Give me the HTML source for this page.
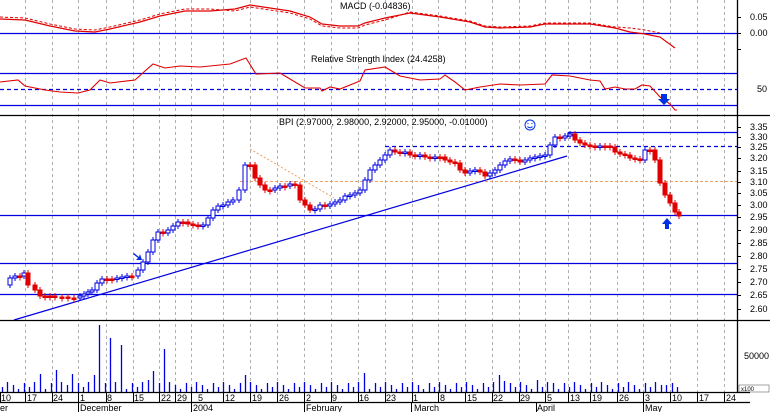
<!DOCTYPE html>
<html><head><meta charset="utf-8"><style>
html,body{margin:0;padding:0;background:#fff;width:770px;height:412px;overflow:hidden}
svg{display:block}
text{font-family:"Liberation Sans",sans-serif;font-size:9px;fill:#000}
</style></head><body>
<svg id="s" width="770" height="412" viewBox="0 0 770 412" xmlns="http://www.w3.org/2000/svg">
<g id="grid" stroke="#b0b0b0" stroke-dasharray="3,3" stroke-width="1"></g>
<line x1="0" y1="33.5" x2="737" y2="33.5" stroke="#0000e0" stroke-width="1.3"/>
<polyline id="macd" fill="none" stroke="#e00000" stroke-width="1.2"/>
<polyline id="macd2" fill="none" stroke="#e00000" stroke-width="1" stroke-dasharray="3,2"/>
<text x="340" y="9">MACD (-0.04836)</text>
<line x1="0" y1="73.5" x2="737" y2="73.5" stroke="#0000e0" stroke-width="1.3"/>
<line x1="0" y1="89.5" x2="737" y2="89.5" stroke="#0000e0" stroke-width="1.3" stroke-dasharray="4,3"/>
<line x1="0" y1="105.5" x2="737" y2="105.5" stroke="#0000e0" stroke-width="1.3"/>
<polyline id="rsi" fill="none" stroke="#e00000" stroke-width="1.1"/>
<text x="311" y="62">Relative Strength Index (24.4258)</text>
<path d="M661 94h6v5h3l-6 6-6-6h3z" fill="#0030e0"/>
<line x1="0" y1="115.5" x2="770" y2="115.5" stroke="#000" stroke-width="1.3"/>
<text x="279" y="125">BPI (2.97000, 2.98000, 2.92000, 2.95000, -0.01000)</text>
<circle cx="530" cy="125" r="5" fill="none" stroke="#0030e0"/>
<path d="M527.5 126.5q2.5 2.5 5 0" fill="none" stroke="#0030e0"/>
<circle cx="528" cy="123.5" r=".6" fill="#0030e0"/><circle cx="532" cy="123.5" r=".6" fill="#0030e0"/>
<line x1="568" y1="132.5" x2="737" y2="132.5" stroke="#0000e0" stroke-width="1.3"/>
<line x1="568" y1="132.5" x2="568" y2="137" stroke="#0000e0" stroke-width="1.3"/>
<line x1="385" y1="146.5" x2="737" y2="146.5" stroke="#0000e0" stroke-width="1.3" stroke-dasharray="4,3"/>
<line x1="240" y1="181.5" x2="737" y2="181.5" stroke="#f0a060" stroke-width="1" stroke-dasharray="3,2"/>
<line x1="250" y1="149" x2="334" y2="198" stroke="#f0a060" stroke-width="1" stroke-dasharray="2,2"/>
<line x1="0" y1="215.5" x2="737" y2="215.5" stroke="#0000e0" stroke-width="1.3"/>
<line x1="0" y1="263.5" x2="737" y2="263.5" stroke="#0000e0" stroke-width="1.3"/>
<line x1="0" y1="294.5" x2="737" y2="294.5" stroke="#0000e0" stroke-width="1.3"/>
<line x1="14" y1="320" x2="567" y2="156" stroke="#0000e0" stroke-width="1.2"/>
<g id="candles"></g>
<path d="M134 253l5 4 1-3 2 6-6 0 2-2-5-4z" fill="#0030e0"/>
<path d="M667 218l5 6h-3v5h-4v-5h-3z" fill="#0030e0"/>
<line x1="0" y1="320.5" x2="770" y2="320.5" stroke="#000" stroke-width="1.3"/>
<g id="vol" stroke="#0000e0" stroke-width="1.3"></g>
<text x="744" y="359">50000</text>
<rect x="739" y="385" width="30" height="7" fill="#fff" stroke="#666" stroke-width=".6"/>
<text x="741" y="391" style="font-size:6px">x100</text>
<line x1="737.5" y1="0" x2="737.5" y2="392" stroke="#000" stroke-width="1.3"/>
<g id="ticks" stroke="#000"></g>
<g id="axis"></g>
<line x1="0" y1="392.5" x2="750" y2="392.5" stroke="#000" stroke-width="1.3"/>
<line x1="0" y1="402.5" x2="750" y2="402.5" stroke="#000" stroke-width="1.3"/>
<g id="dates" style="font-size:8.5px"></g>
</svg>
<script>
(function(){
var NS="http://www.w3.org/2000/svg";
function el(p,t,a,txt){var e=document.createElementNS(NS,t);for(var k in a)e.setAttribute(k,a[k]);if(txt)e.textContent=txt;document.getElementById(p).appendChild(e);return e;}
var gx=[25,52,78,106,133,159,175,191,223,250,277,304,331,358,385,412,438,465,492,519,545,568,590,617,643,670,697,724];
gx.forEach(function(x){el('grid','line',{x1:x+.5,y1:0,x2:x+.5,y2:392});});
function pl(id,pts){document.getElementById(id).setAttribute('points',pts.map(function(p){return p.join(',')}).join(' '));}
var m=[[0,19],[25,20],[50,26],[75,31],[95,32],[110,29],[140,22],[160,16],[185,11],[210,11],[235,9],[250,5],[270,8],[290,11],[310,17],[322,24],[340,26],[358,26],[365,23],[385,18],[410,13],[440,17],[470,22],[485,27],[500,28],[530,27],[545,24],[560,24],[590,24],[615,28],[630,32],[645,34],[660,37],[675,48]];
pl('macd',m);
pl('macd2',m.map(function(p,i){return [p[0],p[1]+(i<10?-2:(i<20?2:(i<30?-1:-4)))]}).slice(0,33));
pl('rsi',[[0,82],[18,80],[25,86],[45,90],[60,92],[78,93],[90,90],[100,80],[110,83],[135,80],[145,71],[153,64],[165,68],[180,66],[200,67],[230,64],[246,58],[256,74],[280,73],[290,79],[305,88],[320,88],[322,91],[330,87],[340,89],[360,81],[365,70],[385,67],[400,76],[420,80],[440,79],[445,75],[455,82],[465,90],[480,87],[500,84],[520,85],[545,84],[552,75],[570,76],[590,80],[600,81],[605,89],[615,87],[625,89],[635,89],[642,85],[650,86],[660,97],[670,104],[675,110],[677,110]]);
var c=[[5,285],[10,278],[15,276],[20,276],[24,273],[28,285],[35,290],[40,296],[45,296],[50,296],[55,297],[62,297],[68,298],[74,298],[80,296],[84,294],[88,292],[92,290],[97,283],[102,279],[107,279],[112,279],[117,278],[122,277],[127,276],[132,276],[138,270],[143,262],[148,252],[153,240],[158,232],[163,233],[168,230],[173,226],[178,222],[183,222],[188,224],[193,225],[198,226],[203,225],[208,218],[213,210],[218,206],[223,205],[228,202],[233,200],[239,190],[245,165],[250,165],[255,178],[260,185],[265,190],[270,190],[275,188],[280,186],[285,186],[290,184],[295,185],[300,200],[305,205],[310,210],[315,209],[320,205],[325,206],[330,204],[335,202],[340,200],[345,196],[350,195],[355,193],[360,190],[365,180],[370,170],[375,165],[380,160],[385,155],[390,150],[395,152],[400,153],[405,152],[410,155],[415,156],[420,155],[425,157],[430,158],[435,157],[440,157],[445,160],[450,162],[455,163],[460,170],[465,173],[470,171],[475,170],[480,172],[485,176],[490,173],[495,170],[500,165],[505,161],[510,159],[515,160],[520,162],[525,160],[530,158],[535,157],[540,156],[545,155],[550,145],[555,137],[560,138],[565,136],[570,134],[575,140],[580,143],[585,145],[590,146],[595,147],[600,146],[605,146],[610,147],[615,152],[620,154],[625,155],[630,158],[635,159],[640,160],[645,150],[650,150],[655,160],[660,183],[665,195],[670,203],[675,212],[679,216]];
for(var i=1;i<c.length;i++){var x=c[i][0],o=c[i-1][1],cl=c[i][1];var up=cl<o;var ty=Math.min(o,cl),h=Math.max(Math.abs(o-cl),1.5);
var col=up?'#0000e0':'#e00000';
el('candles','line',{x1:x,y1:ty-3,x2:x,y2:ty+h+3,stroke:col,'stroke-width':1});
el('candles','rect',{x:x-2,y:ty,width:4,height:h,fill:up?'#fff':col,stroke:col,'stroke-width':1});}
var tall={99:325,110:338,121:345,164:349,56:370,40:374,153:371,74:374,146:380,93:375,245:375,363:373,498:375,506:381,539:380,555:383,665:385,550:379};
for(var x=2;x<680;x+=5.4){var xr=Math.round(x);var y=392-(3+((xr*37)%9));for(var k in tall){if(Math.abs(k-xr)<3)y=tall[k];}
el('vol','line',{x1:xr+.5,y1:y,x2:xr+.5,y2:392});}
var ax=[[3.35,127],[3.30,137],[3.25,147],[3.20,158],[3.15,171],[3.10,182],[3.05,193],[3.00,205],[2.95,217],[2.90,230],[2.85,243],[2.80,256],[2.75,269],[2.70,282],[2.65,295],[2.60,309]];
ax.forEach(function(a){el('axis','text',{x:750,y:a[1]+3},a[0].toFixed(2));el('ticks','line',{x1:737,y1:a[1]+.5,x2:741,y2:a[1]+.5});});
[[0.05,17],[0.00,33],[-0.05,49]].forEach(function(a){if(a[0]>-0.01)el('axis','text',{x:750,y:a[1]+3},a[0].toFixed(2));el('ticks','line',{x1:737,y1:a[1]+.5,x2:741,y2:a[1]+.5});});
el('axis','text',{x:757,y:92},'50');
[0,25,52,78,106,133,159,175,191,223,250,277,304,331,358,385,412,438,465,492,519,545,568,590,617,643,670,697,724].forEach(function(x){el('ticks','line',{x1:x+.5,y1:392,x2:x+.5,y2:402});});
var d=[[1,'10'],[27,'17'],[53,'24'],[80,'1'],[107,'8'],[134,'15'],[161,'22'],[177,'29'],[198,'5'],[225,'12'],[252,'19'],[279,'26'],[306,'2'],[332,'9'],[359,'16'],[386,'23'],[413,'1'],[440,'8'],[467,'15'],[493,'22'],[520,'29'],[547,'5'],[570,'13'],[592,'19'],[619,'26'],[645,'3'],[672,'10'],[699,'17'],[726,'24']];
d.forEach(function(a){el('dates','text',{x:a[0],y:401},a[1]);});
[[0,'er'],[80,'December'],[193,'2004'],[306,'February'],[414,'March'],[537,'April'],[645,'May']].forEach(function(a){el('dates','text',{x:a[0],y:411},a[1]);});
[78,191,304,411,536,643].forEach(function(x){el('ticks','line',{x1:x+.5,y1:402,x2:x+.5,y2:412});});
})();
</script>
</body></html>
